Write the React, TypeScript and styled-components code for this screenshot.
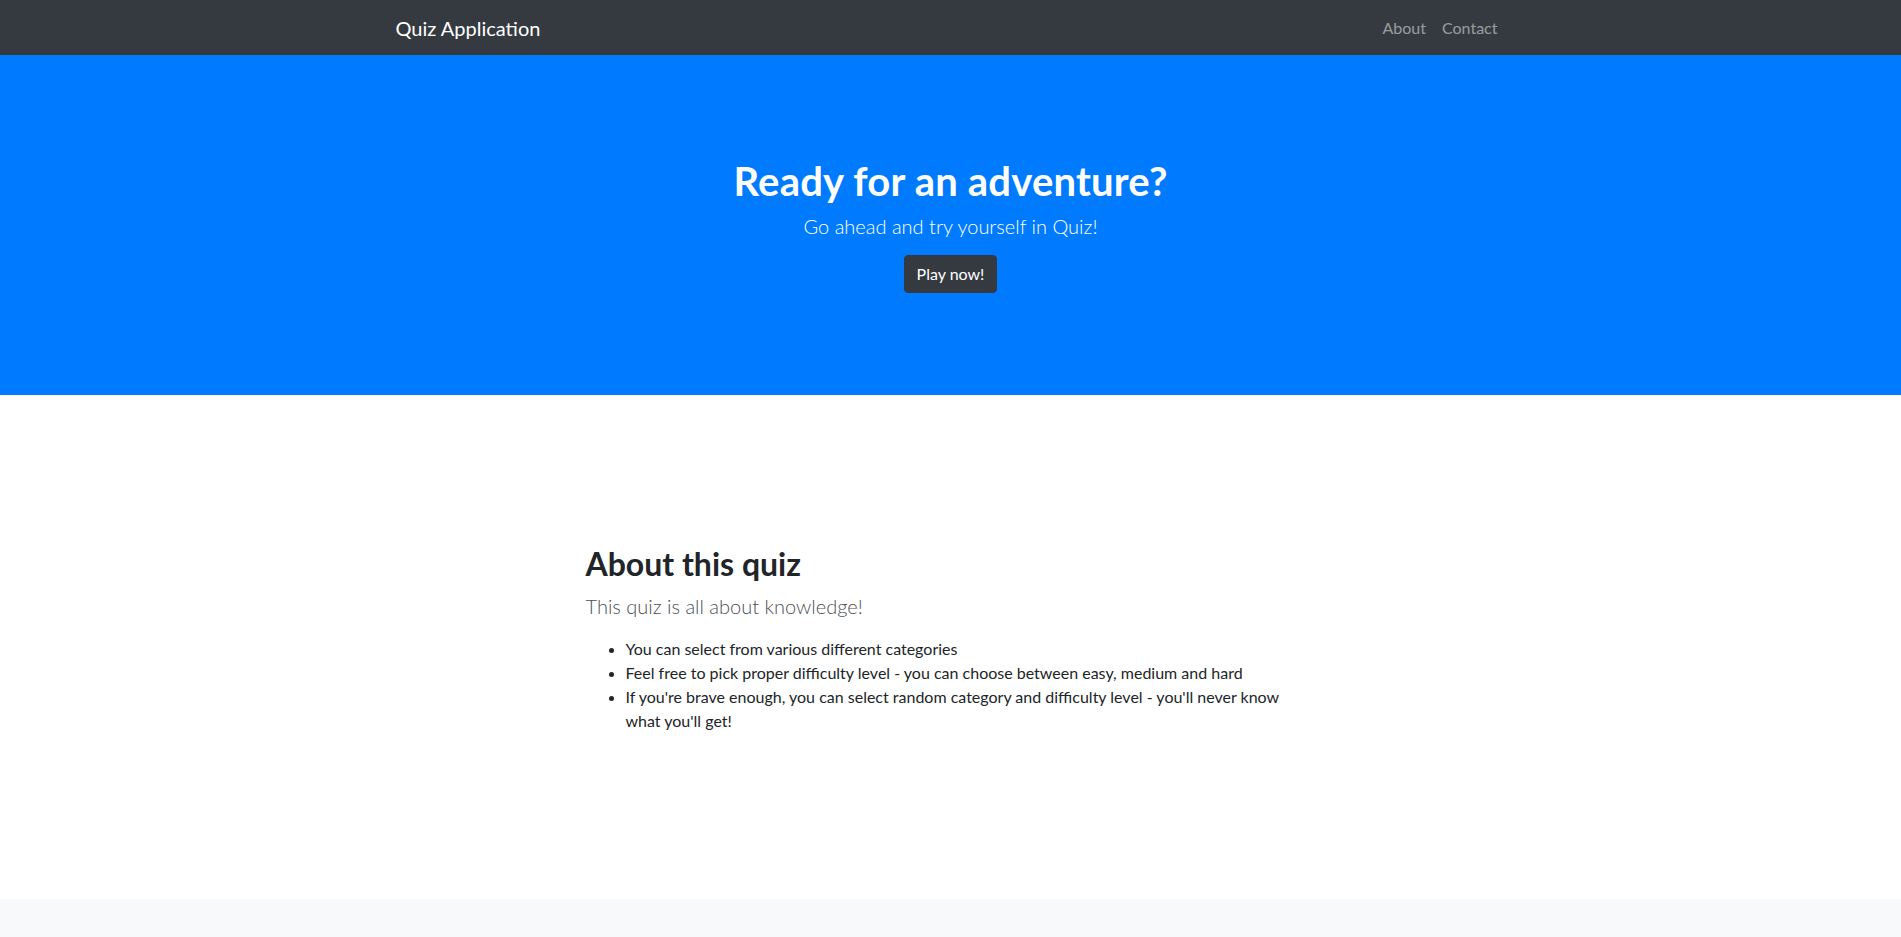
import React from "react";
import styled, { createGlobalStyle } from "styled-components";

const GlobalStyle = createGlobalStyle`
  * {
    box-sizing: border-box;
  }

  body {
    margin: 0;
    font-family: "Segoe UI", Lato, "Open Sans", sans-serif;
    font-size: 16px;
    line-height: 1.5;
    color: #212529;
    background: #fff;
  }
`;

const Container = styled.div`
  width: 1140px;
  margin: 0 auto;
  padding: 0 15px;
`;

const Navbar = styled.nav`
  background: #343a40;
  height: 55px;

  ${Container} {
    height: 100%;
    display: flex;
    align-items: center;
    justify-content: space-between;
  }
`;

const Brand = styled.a`
  color: #fff;
  font-size: 20px;
  text-decoration: none;
`;

const NavLinks = styled.div`
  display: flex;
`;

const NavLink = styled.a`
  color: rgba(255, 255, 255, 0.5);
  padding: 8px;
  text-decoration: none;
  font-size: 16px;
`;

const Hero = styled.header`
  background: #007bff;
  color: #fff;
  height: 340px;
  display: flex;
  flex-direction: column;
  align-items: center;
  justify-content: center;
  text-align: center;

  h1 {
    margin: 0 0 6px;
    font-size: 40px;
    font-weight: 700;
    line-height: 1.2;
    letter-spacing: 0.2px;
  }

  .lead {
    margin: 0 0 14px;
    font-size: 20px;
    font-weight: 300;
  }
`;

const Button = styled.button`
  font-family: inherit;
  font-size: 16px;
  line-height: 1.5;
  padding: 6px 12px;
  border: 1px solid #343a40;
  border-radius: 4px;
  background: #343a40;
  color: #fff;
  cursor: pointer;
`;

const AboutSection = styled.section`
  padding: 150px 0;
`;

// col-md-8 offset-md-2 inside a row
const Column = styled.div`
  width: 760px;
  margin-left: 175px;
  padding: 0 15px;

  h2 {
    margin: 0 0 8px;
    font-size: 32px;
    font-weight: 700;
    line-height: 1.2;
  }

  .lead {
    margin: 0 0 16px;
    font-size: 20px;
    font-weight: 300;
    color: #4a5056;
  }

  ul {
    margin: 0 0 16px;
    padding-left: 40px;
  }
`;

const Footer = styled.footer`
  background: #f8f9fa;
  height: 60px;
`;

export default function App() {
  return (
    <>
      <GlobalStyle />
      <Navbar>
        <Container>
          <Brand href="#">Quiz Application</Brand>
          <NavLinks>
            <NavLink href="#">About</NavLink>
            <NavLink href="#">Contact</NavLink>
          </NavLinks>
        </Container>
      </Navbar>

      <Hero>
        <h1>Ready for an adventure?</h1>
        <p className="lead">Go ahead and try yourself in Quiz!</p>
        <Button type="button">Play now!</Button>
      </Hero>

      <AboutSection>
        <Container>
          <Column>
            <h2>About this quiz</h2>
            <p className="lead">This quiz is all about knowledge!</p>
            <ul>
              <li>You can select from various different categories</li>
              <li>Feel free to pick proper difficulty level - you can choose between easy, medium and hard</li>
              <li>If you're brave enough, you can select random category and difficulty level - you'll never know what you'll get!</li>
            </ul>
          </Column>
        </Container>
      </AboutSection>

      <Footer />
    </>
  );
}
